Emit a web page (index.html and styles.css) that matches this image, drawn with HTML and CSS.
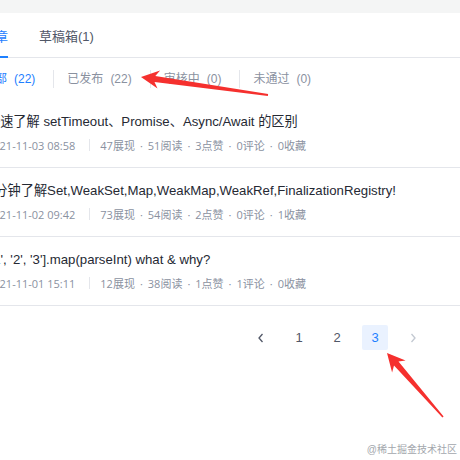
FILE: index.html
```html
<!DOCTYPE html>
<html lang="zh-CN">
<head>
<meta charset="utf-8">
<title>文章管理</title>
<link rel="stylesheet" href="styles.css">
</head>
<body>
<div class="card">
  <div class="tabs">
    <div class="tab active">文章</div>
    <div class="tab">草稿箱(1)</div>
  </div>
  <div class="filters">
    <div class="filter active">全部<span class="count">(22)</span></div>
    <div class="filter">已发布<span class="count">(22)</span></div>
    <div class="filter">审核中<span class="count">(0)</span></div>
    <div class="filter">未通过<span class="count">(0)</span></div>
  </div>
  <div class="list">
    <div class="item">
      <div class="title">快速了解 setTimeout、Promise、Async/Await 的区别</div>
      <div class="meta"><span class="date">2021-11-03 08:58</span><span class="vline"></span><span>47展现</span><span class="dot">·</span><span>51阅读</span><span class="dot">·</span><span>3点赞</span><span class="dot">·</span><span>0评论</span><span class="dot">·</span><span>0收藏</span></div>
    </div>
    <div class="item">
      <div class="title">5分钟了解Set,WeakSet,Map,WeakMap,WeakRef,FinalizationRegistry!</div>
      <div class="meta"><span class="date">2021-11-02 09:42</span><span class="vline"></span><span>73展现</span><span class="dot">·</span><span>54阅读</span><span class="dot">·</span><span>2点赞</span><span class="dot">·</span><span>0评论</span><span class="dot">·</span><span>1收藏</span></div>
    </div>
    <div class="item">
      <div class="title">['1', '2', '3'].map(parseInt) what &amp; why?</div>
      <div class="meta"><span class="date">2021-11-01 15:11</span><span class="vline"></span><span>12展现</span><span class="dot">·</span><span>38阅读</span><span class="dot">·</span><span>1点赞</span><span class="dot">·</span><span>1评论</span><span class="dot">·</span><span>0收藏</span></div>
    </div>
  </div>
  <div class="pager">
    <div class="page-btn"><svg width="8" height="10" viewBox="0 0 8 10"><path d="M5.5 1 L2 5 L5.5 9" fill="none" stroke="#515767" stroke-width="1.3"/></svg></div>
    <div class="page-btn">1</div>
    <div class="page-btn">2</div>
    <div class="page-btn current">3</div>
    <div class="page-btn"><svg width="8" height="10" viewBox="0 0 8 10"><path d="M2.5 1 L6 5 L2.5 9" fill="none" stroke="#c2c8d1" stroke-width="1.3"/></svg></div>
  </div>
</div>
<svg class="arrows" width="460" height="460" viewBox="0 0 460 460">
  <polygon fill="#f5302e" points="141,77 160.1,70.6 155.3,76.0 268.1,94.0 267.9,96.0 154.5,82.0 157.5,88.4"/>
  <polygon fill="#f5302e" points="387,353 405.6,360.6 398.5,361.6 443.6,416.5 442.4,417.5 394.0,365.5 392.1,372.5"/>
</svg>
<div class="watermark">@稀土掘金技术社区</div>
</body>
</html>
```

FILE: styles.css
```css
* { box-sizing: border-box; }
html, body { margin: 0; padding: 0; }
body {
  width: 460px;
  height: 460px;
  overflow: hidden;
  background: #f4f5f5;
  font-family: "Liberation Sans", "Noto Sans CJK SC", sans-serif;
  position: relative;
}
.card {
  margin-top: 13px;
  margin-left: -18px;
  width: 478px;
  min-height: 447px;
  background: #fff;
}
.tabs {
  display: flex;
  height: 45px;
  border-bottom: 1px solid #e4e6eb;
  gap: 31px;
}
.tab {
  display: flex;
  align-items: center;
  padding-top: 1px;
  font-size: 13px;
  color: #515767;
  border-bottom: 2px solid transparent;
  margin-bottom: -1px;
}
.tab.active {
  color: #1e80ff;
  border-bottom-color: #1e80ff;
}
.filters {
  display: flex;
  align-items: center;
  height: 41px;
  padding-left: 1px;
}
.filter {
  font-size: 12px;
  color: #8a919f;
  padding: 0 18px 0 13px;
  border-left: 1px solid #e4e6eb;
  line-height: 18px;
}
.filter:first-child {
  border-left: none;
  padding-left: 0;
}
.filter.active { color: #1e80ff; }
.count { margin-left: 7px; }
.item {
  padding: 12px 0 12px 5px;
  border-bottom: 1px solid #e4e6eb;
}
.title {
  font-size: 13.2px;
  line-height: 22px;
  color: #252933;
  white-space: nowrap;
}
.meta {
  margin-top: 2px;
  display: flex;
  align-items: center;
  height: 20px;
  font-family: "Open Sans", "Noto Sans CJK SC", sans-serif;
  font-size: 11px;
  color: #8a919f;
  white-space: nowrap;
}
.vline {
  width: 1px;
  height: 12px;
  background: #e4e6eb;
  margin: 0 10px 0 14px;
}
.dot { margin: 0 5px; }
.pager {
  display: flex;
  justify-content: flex-end;
  padding-right: 28px;
  margin-top: 19px;
}
.page-btn {
  width: 26px;
  height: 25px;
  margin: 0 6px;
  display: flex;
  align-items: center;
  justify-content: center;
  font-size: 13px;
  color: #515767;
  border-radius: 2px;
}
.page-btn.current {
  background: #eaf2ff;
  color: #1e80ff;
}
.arrows {
  position: absolute;
  left: 0;
  top: 0;
  pointer-events: none;
}
.watermark {
  position: absolute;
  right: 3px;
  bottom: 4px;
  font-size: 10px;
  color: #a3a7ad;
  text-shadow: 0 0 2px #fff;
}
```
